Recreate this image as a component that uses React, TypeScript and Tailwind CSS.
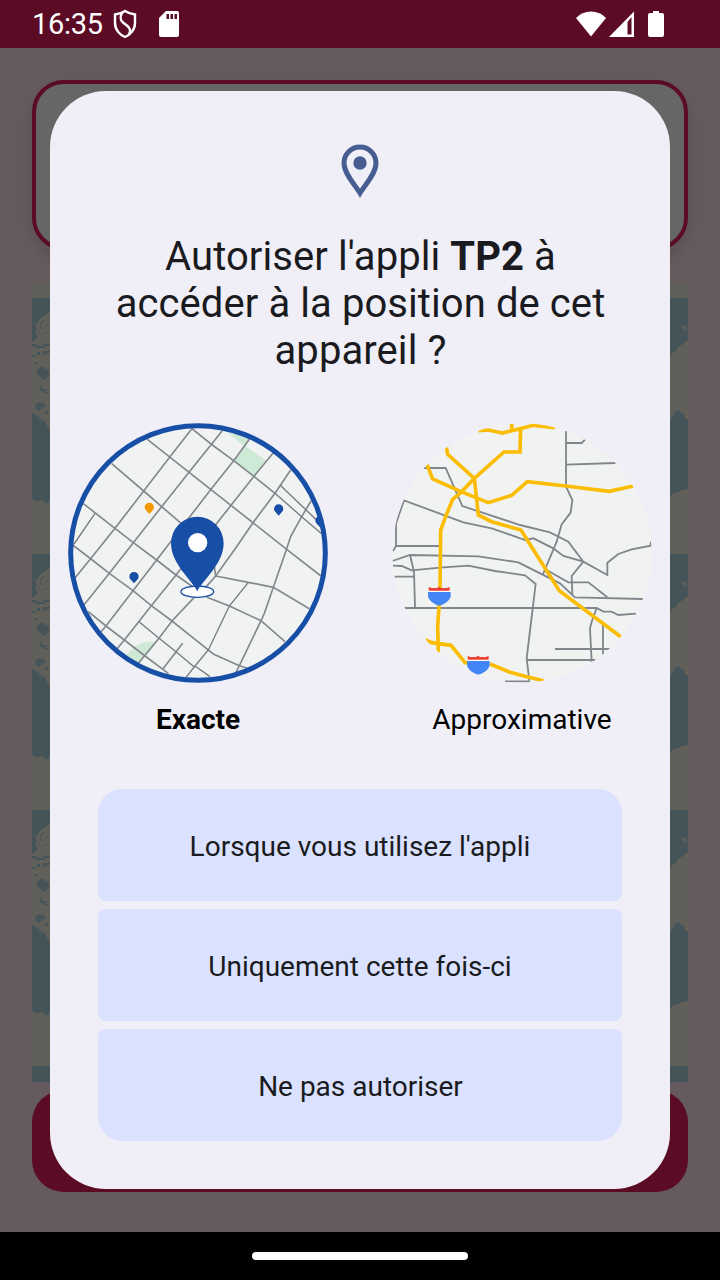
import React from "react";

function StatusBar() {
  return (
    <header className="flex h-12 shrink-0 items-center justify-between bg-[#5c0b25] pl-8 pr-[56px] text-white">
      <div className="flex items-center">
        <span className="w-[72px] text-[29px] leading-[48px] tracking-[-0.3px]">16:35</span>
        <svg className="ml-[9px] h-[30px] w-[24px]" viewBox="0 0 24 30" fill="none" stroke="white" strokeWidth="2.400">
          <path d="M12 2 C9 4 5 5 2 5.500 V14 C2 21 7 26 12 28 C17 26 22 21 22 14 V5.500 C19 5 15 4 12 2Z" />
          <path d="M9.500 3.500 C7 7 7 11 10 13.500 L14.500 17 C17.500 19.500 18 23 15.500 25.500" />
        </svg>
        <svg className="ml-[22px] h-[26px] w-5" viewBox="0 0 20 26">
          <path fill="white" d="M7 0H18Q20 0 20 2V24Q20 26 18 26H2Q0 26 0 24V7Z" />
          <path fill="#5c0b25" d="M7.500 3H10V8H7.500ZM11.500 3H14V8H11.500ZM15.500 3H18V8H15.500Z" />
        </svg>
      </div>
      <div className="flex items-center">
        <svg className="h-[26px] w-[30px]" viewBox="0 0 30 26">
          <path fill="white" d="M0 7Q6 0.500 15 0.500Q24 0.500 30 7L15 25.500Z" />
        </svg>
        <svg className="ml-[3px] h-[26px] w-[25px]" viewBox="0 0 25 26">
          <path fill="white" d="M25 0.500V26H0Z" />
          <path fill="#5c0b25" d="M22.500 6V23.500H18.500V11Z" />
        </svg>
        <svg className="ml-[14px] h-[26px] w-4" viewBox="0 0 16 26">
          <path fill="white" d="M5 0H11V2H14Q16 2 16 4V24Q16 26 14 26H2Q0 26 0 24V4Q0 2 2 2H5Z" />
        </svg>
      </div>
    </header>
  );
}

function WorldTile({ y }: { y: number }) {
  return (
    <g transform={`translate(0 ${y})`}>
      <path fill="#605f59" d="M18 14 L13 17 9 20 6 24 3 27 5 31 3 35 6 39 2 42 0 44V115L6 118 9 122 13 123 18 134Z" />
      <g fill="#445459">
        <path d="M0 46H5V48H11V46H18V48H13V50H4V48H0ZM5 54H8V57H5ZM11 53H18V55H14V57H11ZM0 57H3V59H0ZM2 64H5V66H2ZM6 71L11 68 13 71 17 72V79H14L13 82 7 79 5 75Z" />
        <path d="M8 88H10V91H14V94H17V95H13L12 93H9ZM3 107L7 104 12 105 14 108 10 110 8 113 4 111ZM12 113H16V116H14Z" />
      </g>
      <path d="M5 36L9 31 8 26 13 22M9 38L13 34 16 36M13 29L17 25" fill="none" stroke="#445459" strokeWidth="0.8" />
      <path fill="#605f59" d="M0 201L4 203 10 202 14 206 18 202V256H0Z" />
      <path fill="#605f59" d="M638 58L641 54 644 53 646 49 649 47 652 46 654 43 656 43V122L653 120 652 115 649 115 647 112 643 113 640 119 638 123ZM649 29L651 27 654 29 655 33 652 31Z" />
      <path fill="#605f59" d="M638 198L642 195 647 194 650 192 656 191V256H638Z" />
    </g>
  );
}

function Backdrop() {
  return (
    <main className="flex h-[1184px] flex-col px-8 pt-8">
      <div className="h-[170px] shrink-0 rounded-[32px] border-4 border-[#5c0b25] bg-[#666666] shadow-[0_8px_16px_rgba(0,0,0,0.12)]" />
      <svg className="mt-8 h-[800px] w-[656px] shrink-0" viewBox="0 0 656 800">
        <rect width="656" height="800" fill="#445459" />
        <rect width="656" height="16" fill="#605f59" />
        <WorldTile y={16} />
        <WorldTile y={272} />
        <WorldTile y={528} />
        <rect y="784" width="656" height="16" fill="#445459" />
      </svg>
      <div className="mt-2 h-[102px] shrink-0 rounded-[32px] bg-[#5c0b25]" />
    </main>
  );
}

function SmallPin({ x, y, color }: { x: number; y: number; color: string }) {
  return (
    <path
      transform={`translate(${x} ${y})`}
      fill={color}
      d="M0 20 L-9 10 Q-14 5 -14 0 A14 14 0 0 1 14 0 Q14 5 9 10Z"
    />
  );
}

function ExactMap() {
  return (
    <svg className="size-[260px]" viewBox="24 24 780 780">
      <defs>
        <clipPath id="exact"><circle cx="414" cy="414" r="386" /></clipPath>
      </defs>
      <circle cx="414" cy="414" r="386" fill="#f1f3f2" />
      <g clipPath="url(#exact)">
        <path fill="#ceead6" d="M500 50L572 70 557 94 620 137 582 184 521 137 550 92ZM195 728Q225 678 270 680L292 681 238 748Z" />
        <g fill="none" stroke="#85888e" strokeWidth="5">
          <path d="M262 73L680 403 783 483M155 146L251 228 305 275 360 322 455 398 467 483M70 266L165 340 220 383 290 435 348 480 445 548 508 573 603 617 675 680" />
          <path d="M38 390L93 432 148 475 219 527 274 572 336 618 405 673 460 717 538 752 562 760M85 590L138 633 193 675 255 723 325 775M395 40L453 87 521 137 582 184 645 235" />
          <path d="M395 42L330 125 251 228 165 340 93 430 40 495M487 47L455 87 387 172 305 275 220 383 148 475 70 572M568 73L521 137 453 223 405 285 290 435 219 527 138 633 118 656" />
          <path d="M640 113L582 184 513 271 348 480 274 572 193 675 170 703M692 165L645 235 579 323 523 405 467 483 445 508 400 550 336 618 297 670 235 745" />
          <path d="M753 258L725 305 692 365 677 410 640 517 613 595 603 617 538 752 525 778M467 483L565 502 640 517 748 581M368 685L308 763" />
        </g>
        <g fill="none" stroke="#777a80" strokeWidth="4">
          <path d="M645 235L725 305 783 355M660 210L775 320M42 387L105 295M237 620L297 670 348 710 402 755M405 753L450 785M565 502L508 573 445 705 405 753 378 787" />
        </g>
        <SmallPin x={268} y={277} color="#f29900" />
        <SmallPin x={656} y={282} color="#174ea6" />
        <SmallPin x={222} y={485} color="#174ea6" />
        <SmallPin x={780} y={317} color="#174ea6" />
        <ellipse cx="412" cy="530" rx="49" ry="17" fill="white" stroke="#174ea6" strokeWidth="4" />
        <path fill="#174ea6" d="M412 529 C398 498 333 447 333 385 A79 80 0 0 1 491 385 C491 447 426 498 412 529Z" />
        <circle cx="413" cy="383" r="29" fill="white" />
      </g>
      <circle cx="414" cy="414" r="382" fill="none" stroke="#174ea6" strokeWidth="15" />
    </svg>
  );
}

function Shield({ x, y }: { x: number; y: number }) {
  return (
    <g transform={`translate(${x} ${y})`}>
      <path fill="white" d="M2 8H68V16H2Z" />
      <path fill="#ea4335" d="M3 -2L12 1H28L34 -3 40 1H57L66 -2V9H3Z" />
      <path fill="#4285f4" d="M1 13H69V26C65 43 45 52 35 54C24 52 5 43 1 26Z" />
    </g>
  );
}

function ApproximateMap() {
  return (
    <svg className="size-[260px]" viewBox="21 24 780 780">
      <defs>
        <clipPath id="approx"><circle cx="411" cy="414" r="389" /></clipPath>
      </defs>
      <circle cx="411" cy="414" r="389" fill="#f1f3f2" />
      <g clipPath="url(#approx)" fill="none">
        <g stroke="#80868b" strokeWidth="5.500">
          <path d="M115 159H182L232 273 405 330 495 352 550 380 595 440 560 483 562 540M24 408L33 393V325L57 256 235 322 320 340 420 375 445 370 505 400 535 423 595 440 667 480V443L700 417 740 403 797 392V380M33 393H163" />
          <path d="M543 47V215L562 255 557 293 530 328 515 380 473 480M543 84H590L600 74M543 149L692 144" />
          <path d="M22 438L75 420 280 424 400 442 425 455 525 505 570 547 773 552M22 452L50 453 80 466 165 458 250 452 330 468 420 481 452 507 425 730 433 797M75 420L87 470 90 578M28 485H87" />
          <path d="M58 579H635L655 590H680L700 600 753 596M635 579L620 620 615 640 620 740M654 630V720M510 702H674M425 735H632M485 465L550 502H610L667 547M360 799H435" />
        </g>
        <g stroke="#fbbc04" strokeWidth="11">
          <path d="M280 47L310 45 352 54 405 41 445 31 510 38M380 26V47M407 38L405 111H357L268 190 228 232 203 253 183 302 167 345 165 520 162 575 158 635 160 712" />
          <path d="M184 96L188 118 268 190 280 300 320 320 408 345 455 420 523 527 707 665M126 149L143 192 228 230 310 263 380 241 427 200 543 213 672 229 745 213" />
          <path d="M122 675L140 683 198 691 240 743 280 750M315 747L375 772 420 784 475 797" />
        </g>
        <Shield x={128} y={518} />
        <Shield x={245} y={725} />
      </g>
    </svg>
  );
}

function PermissionDialog() {
  return (
    <section role="dialog" className="absolute left-[50px] top-[91px] flex h-[1098px] w-[620px] flex-col items-center rounded-[56px] bg-[#f0eff7] pt-[53px]">
      <svg className="h-[54px] w-[38px]" viewBox="0 0 38 54" fill="none">
        <path d="M19 49C15 42 3 30 3 19A16 16 0 0 1 35 19C35 30 23 42 19 49Z" stroke="#475d92" strokeWidth="5" />
        <circle cx="19" cy="19" r="6.700" fill="#475d92" />
      </svg>
      <h1 className="mt-[35px] pl-px text-center text-[40px] font-normal leading-[47px] tracking-[0.08px] text-[#1a1b20]">
        Autoriser l&#39;appli <b className="font-bold">TP2</b> à<br />accéder à la position de cet<br />appareil ?
      </h1>
      <div className="mt-[49px] flex gap-16">
        <figure className="flex flex-col items-center">
          <ExactMap />
          <figcaption className="mt-5 text-[28px] font-bold leading-[33px] text-black">Exacte</figcaption>
        </figure>
        <figure className="flex flex-col items-center">
          <ApproximateMap />
          <figcaption className="mt-5 text-[28px] leading-[33px] text-black">Approximative</figcaption>
        </figure>
      </div>
      <div className="mt-[53px] flex w-[524px] flex-col gap-2 text-[28px] leading-[33px] text-[#1a1b20]">
        <button className="h-28 rounded-b-lg rounded-t-3xl bg-[#dae2ff] pt-0.5">Lorsque vous utilisez l&#39;appli</button>
        <button className="h-28 rounded-lg bg-[#dae2ff] pt-0.5">Uniquement cette fois-ci</button>
        <button className="h-28 rounded-b-3xl rounded-t-lg bg-[#dae2ff] pl-px pt-0.5">Ne pas autoriser</button>
      </div>
    </section>
  );
}

export default function App() {
  return (
    <div className="relative flex h-[1280px] w-[720px] flex-col overflow-hidden bg-[#655a5d] font-['Roboto',sans-serif]">
      <StatusBar />
      <Backdrop />
      <PermissionDialog />
      <footer className="flex h-12 shrink-0 items-center justify-center bg-black">
        <div className="h-2 w-[216px] rounded-full bg-white" />
      </footer>
    </div>
  );
}
